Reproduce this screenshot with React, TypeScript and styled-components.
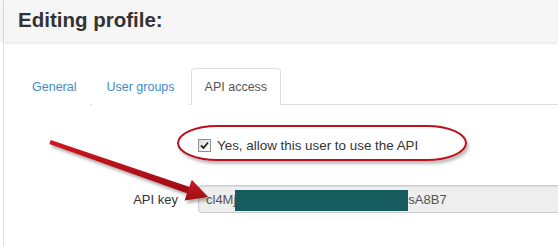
import React from "react";
import styled, { createGlobalStyle } from "styled-components";

const GlobalStyle = createGlobalStyle`
  html, body { margin: 0; padding: 0; background: #ffffff; }
  body { font-family: "Liberation Sans", Arial, sans-serif; color: #333; }
  * { box-sizing: border-box; }
`;

const Wrapper = styled.div`
  position: relative;
  width: 558px;
  height: 246px;
  overflow: hidden;
  padding-left: 3px;
  background: linear-gradient(#f6f6f6 0 42px, #ffffff 42px);
`;

const Page = styled.div`
  border-left: 1px solid #e4e4e4;
  height: 100%;
`;

const Header = styled.header`
  height: 42px;
  background: #f6f6f6;
  box-shadow: 0 1px 3px rgba(0, 0, 0, 0.14);
  padding-left: 14px;
`;

const Title = styled.h1`
  margin: 0;
  font-size: 20.5px;
  font-weight: bold;
  line-height: 40px;
  color: #333;
`;

const Body = styled.div`
  padding: 26px 0 0 14px;
`;

const TabBar = styled.ul`
  display: flex;
  margin: 0;
  padding: 0;
  list-style: none;
  border-bottom: 1px solid #dddddd;
`;

const Tab = styled.li<{ $active?: boolean }>`
  margin: 0 2px -1px 0;
  padding: 9px 13px 8px;
  font-size: 12.5px;
  line-height: 18px;
  border: 1px solid ${(p) => (p.$active ? "#dddddd" : "transparent")};
  border-bottom-color: ${(p) => (p.$active ? "#ffffff" : "transparent")};
  border-radius: 4px 4px 0 0;
  background: #ffffff;
  color: ${(p) => (p.$active ? "#555555" : "#428bca")};
`;

const Form = styled.div`
  display: grid;
  grid-template-columns: 160px 1fr;
  column-gap: 20px;
  row-gap: 30px;
  margin-top: 30px;
  align-items: center;
`;

const CheckRow = styled.label`
  grid-column: 2;
  display: flex;
  align-items: center;
  gap: 6px;
  height: 20px;
  font-size: 13.4px;
  color: #333;
`;

const CheckBox = styled.span`
  width: 13px;
  height: 13px;
  border: 1px solid #8e8f8f;
  background: linear-gradient(135deg, #dcdcdc, #ffffff);
  display: flex;
  align-items: center;
  justify-content: center;
`;

const Label = styled.span`
  text-align: right;
  font-size: 13px;
  color: #333;
`;

const KeyField = styled.div`
  display: flex;
  align-items: center;
  height: 28px;
  margin-right: -20px;
  padding: 0 7px;
  background: #eeeeee;
  border: 1px solid #cccccc;
  border-right: none;
  border-radius: 4px 0 0 4px;
  box-shadow: inset 0 1px 1px rgba(0, 0, 0, 0.075);
  font-size: 13px;
  color: #555;
  white-space: nowrap;
`;

const Redacted = styled.span`
  display: inline-block;
  width: 173px;
  height: 21px;
  margin: 3px 0 0 -1px;
  background: #165b5e;
`;

const Ring = styled.div`
  position: absolute;
  left: 177px;
  top: 125px;
  width: 290px;
  height: 36px;
  border: 2px solid #b8131c;
  border-radius: 40px / 18px;
  box-shadow: 2px 3px 3px rgba(0, 0, 0, 0.25);
  pointer-events: none;
`;

const ArrowLayer = styled.svg`
  position: absolute;
  left: 0;
  top: 0;
  pointer-events: none;
`;

function Arrow() {
  const tx = 50, ty = 142, px = 208, py = 197;
  const dx = px - tx, dy = py - ty;
  const len = Math.hypot(dx, dy);
  const ux = dx / len, uy = dy / len;
  const nx = -uy, ny = ux;
  const hl = 21, hw = 11;
  const bx = px - hl * ux, by = py - hl * uy;
  const w0 = 2, w1 = 3.5;
  const shaft = [
    [tx + nx * w0, ty + ny * w0],
    [bx + nx * w1 + ux * 2, by + ny * w1 + uy * 2],
    [bx - nx * w1 + ux * 2, by - ny * w1 + uy * 2],
    [tx - nx * w0, ty - ny * w0],
  ];
  const head = [
    [px, py],
    [bx + nx * hw, by + ny * hw],
    [bx - nx * hw, by - ny * hw],
  ];
  const pts = (a: number[][]) => a.map((p) => p.join(",")).join(" ");
  return (
    <ArrowLayer width={558} height={246} viewBox="0 0 558 246">
      <defs>
        <filter id="sh" x="-10%" y="-10%" width="130%" height="130%">
          <feGaussianBlur stdDeviation="1.5" />
        </filter>
        <linearGradient id="ag" x1="0" y1="0" x2="0" y2="1">
          <stop offset="0" stopColor="#d0161f" />
          <stop offset="1" stopColor="#9c0d14" />
        </linearGradient>
      </defs>
      <g transform="translate(2,3)" fill="rgba(0,0,0,0.3)" filter="url(#sh)">
        <polygon points={pts(shaft)} />
        <polygon points={pts(head)} />
      </g>
      <polygon points={pts(shaft)} fill="url(#ag)" />
      <polygon points={pts(head)} fill="url(#ag)" />
    </ArrowLayer>
  );
}

export default function App() {
  return (
    <>
      <GlobalStyle />
      <Wrapper>
        <Page>
          <Header>
            <Title>Editing profile:</Title>
          </Header>
          <Body>
            <TabBar>
              <Tab>General</Tab>
              <Tab>User groups</Tab>
              <Tab $active>API access</Tab>
            </TabBar>
            <Form>
              <CheckRow>
                <CheckBox>
                  <svg width="9" height="9" viewBox="0 0 9 9">
                    <path d="M1 4.5 L3.5 7 L8 1.5" fill="none" stroke="#222" strokeWidth="1.8" />
                  </svg>
                </CheckBox>
                Yes, allow this user to use the API
              </CheckRow>
              <Label>API key</Label>
              <KeyField>
                cl4Mj
                <Redacted />
                sA8B7
              </KeyField>
            </Form>
          </Body>
        </Page>
        <Ring />
        <Arrow />
      </Wrapper>
    </>
  );
}
